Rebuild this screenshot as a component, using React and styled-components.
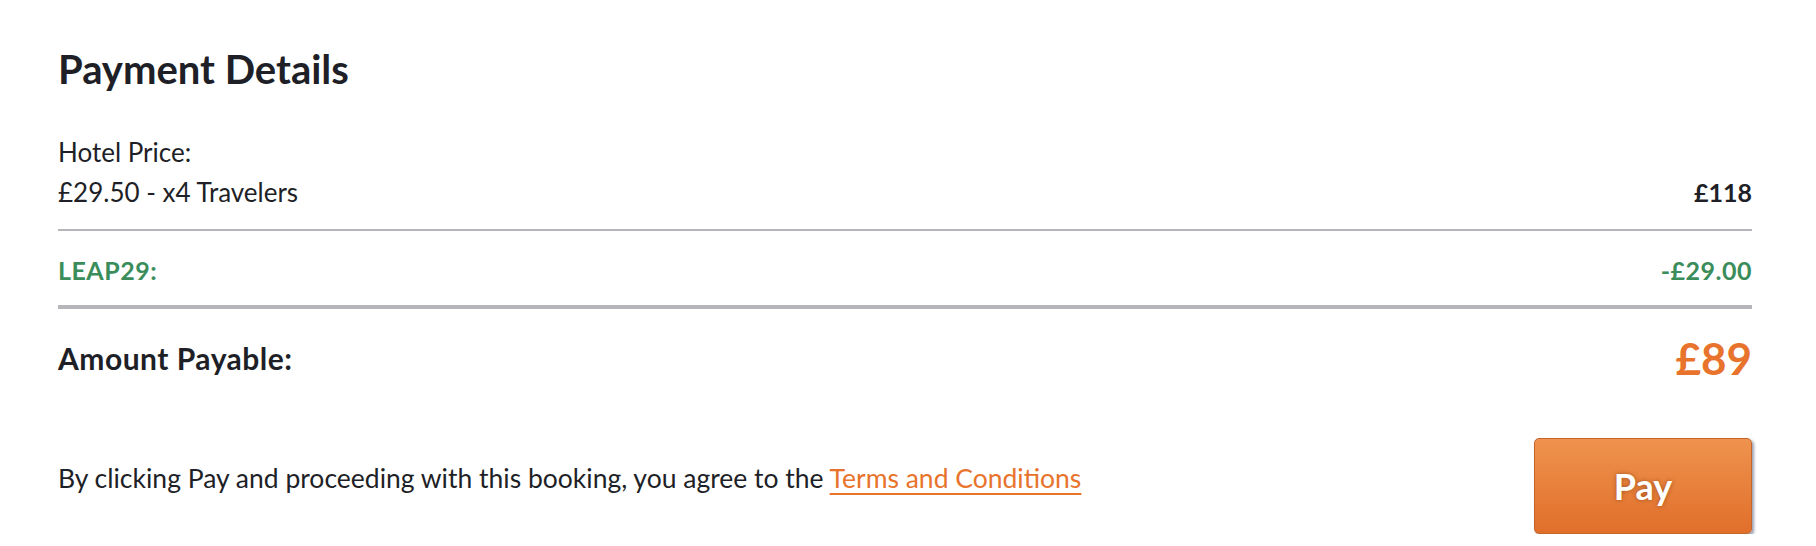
import React from 'react';
import styled, { createGlobalStyle } from 'styled-components';

const GlobalStyle = createGlobalStyle`
    body {
        margin: 0;
        background: #ffffff;
        font-family: Lato, "Open Sans", sans-serif;
        color: #1e1f27;
    }
`

const Container = styled.div`
    padding: 47px 64px 0 58px;
`

const Title = styled.h2`
    margin: 0;
    font-size: 40px;
    line-height: 44px;
    font-weight: 700;
`

const Rows = styled.div`
    margin-top: 41px;
`

const Label = styled.div`
    font-size: 26px;
    line-height: 40px;
`

const Row = styled.div`
    display: flex;
    justify-content: space-between;
    align-items: center;
    line-height: ${props => props.tall ? "50px" : "40px"};
    font-size: ${props => props.tall ? "30px" : "26px"};
    color: ${props => props.color || "#1e1f27"};
`

const Amount = styled.span`
    font-weight: 700;
    font-size: ${props => props.size || "25px"};
    color: ${props => props.color || "inherit"};
    letter-spacing: ${props => props.spaced ? "0.5px" : "0"};
`

const Code = styled.span`
    font-weight: 700;
    font-size: ${props => props.size || "25px"};
    letter-spacing: 0.5px;
`

const Divider = styled.hr`
    border: none;
    margin: ${props => props.margin};
    height: ${props => props.thick ? "4px" : "2px"};
    background-color: #b5b5ba;
`

const Footer = styled.div`
    display: flex;
    justify-content: space-between;
    align-items: center;
    margin-top: 55px;
`

const Terms = styled.p`
    margin: 0 0 16px;
    font-size: 26.5px;
    line-height: 32px;
`

const Link = styled.a`
    color: #e8732c;
    text-decoration: underline;
    text-underline-offset: 5px;
    text-decoration-thickness: 2px;
    cursor: pointer;
`

const PayButton = styled.button`
    width: 218px;
    height: 96px;
    border: 1px solid #c4652b;
    border-radius: 5px;
    background: linear-gradient(to bottom, #ef934e, #e06f2a);
    box-shadow: 2px 2px 3px rgba(70, 80, 110, 0.55);
    color: #ffffff;
    font-family: Lato, "Open Sans", sans-serif;
    font-size: 36px;
    font-weight: 700;
    text-shadow: 0 0 4px rgba(120, 50, 10, 0.6);
    cursor: pointer;
`

const App = () => {
    return (
        <Container>
            <GlobalStyle />
            <Title>Payment Details</Title>
            <Rows>
                <Label>Hotel Price:</Label>
                <Row>
                    <span>£29.50 - x4 Travelers</span>
                    <Amount>£118</Amount>
                </Row>
                <Divider margin="17px 0 19px" />
                <Row color="#3a8d5b">
                    <Code>LEAP29:</Code>
                    <Amount spaced>-£29.00</Amount>
                </Row>
                <Divider thick margin="15px 0 24px" />
                <Row tall>
                    <Code size="30px">Amount Payable:</Code>
                    <Amount size="44px" color="#e8732c">£89</Amount>
                </Row>
            </Rows>
            <Footer>
                <Terms>
                    By clicking Pay and proceeding with this booking, you agree to the <Link>Terms and Conditions</Link>
                </Terms>
                <PayButton>Pay</PayButton>
            </Footer>
        </Container>
    )
}

export default App
